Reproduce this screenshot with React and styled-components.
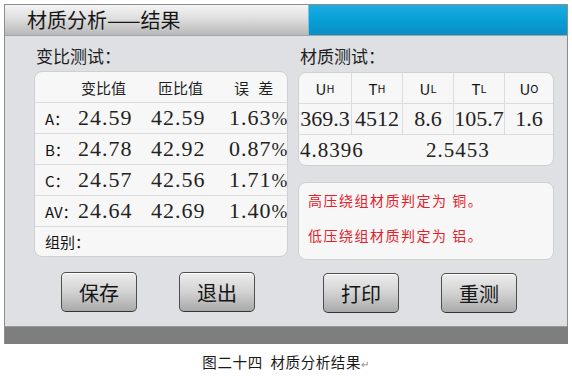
import * as React from "react"
import styled, { createGlobalStyle } from "styled-components"

const SANS = `"Noto Sans CJK SC", "Noto Sans", sans-serif`
const SERIF = `"Liberation Serif", "DejaVu Serif", serif`

const GlobalStyle = createGlobalStyle`
  body {
    margin: 0;
    background: #ffffff;
    font-family: ${SANS};
  }
`

const Page = styled.div`
  width: 572px;
  height: 377px;
  overflow: hidden;
`

const Frame = styled.div`
  margin: 4px 0 0 4px;
  width: 564px;
  box-sizing: border-box;
  border: 1px solid #8d8d8d;
  border-bottom: none;
`

const TitleBar = styled.div`
  display: flex;
  height: 30px;
  background: linear-gradient(#f4f4f4, #dedede 45%, #b8b8ba);
  border-bottom: 1px solid #a4a4a6;
`

const Title = styled.div`
  flex: 1;
  padding-left: 22px;
  font-size: 20px;
  line-height: 30px;
  color: #161616;
`

const BlueBar = styled.div`
  width: 259px;
  background: linear-gradient(#1cacdf, #08a0d6 50%, #0a8fc3);
  box-shadow: inset 1px 0 0 #6cc6e6;
`

const Body = styled.div`
  display: grid;
  grid-template-columns: 254px 256px;
  column-gap: 10px;
  padding: 0 13px 13px 29px;
  background: #dfe0e4;
  border-bottom: 1px solid #9a9a9a;
`

const Column = styled.div`
  display: flex;
  flex-direction: column;
`

const SectionLabel = styled.div`
  height: ${(p) => p.$h}px;
  padding: 5px 0 0 ${(p) => p.$indent}px;
  box-sizing: border-box;
  font-size: 17px;
  line-height: 30px;
  color: #1e1e1e;
`

const Card = styled.div`
  background: #f7f7f7;
  border: 1px solid #cfd0d3;
  border-radius: 8px;
  overflow: hidden;
  box-sizing: border-box;
`

const RatioRow = styled.div`
  display: grid;
  grid-template-columns: 43px 73px 78px 1fr;
  align-items: center;
  height: ${(p) => p.$h || 31}px;
  border-top: ${(p) => (p.$first ? "none" : "1px solid #dcdcdc")};
  box-sizing: border-box;
`

const HeadCell = styled.div`
  padding-left: ${(p) => p.$pad}px;
  font-size: 15px;
  color: #1e1e1e;
  word-spacing: 6px;
  white-space: nowrap;
`

const RowLabel = styled.div`
  padding-left: 10px;
  font-size: 15px;
  color: #111;
  white-space: nowrap;
`

const Value = styled.div`
  font-family: ${SERIF};
  font-size: 22px;
  letter-spacing: 1px;
  color: #222;
  white-space: nowrap;
`

const Pct = styled.span`
  font-size: 19px;
  letter-spacing: 0;
`

const MatRow = styled.div`
  display: grid;
  grid-template-columns: 52px 51px 51px 51px 1fr;
  height: ${(p) => p.$h}px;
  border-top: ${(p) => (p.$first ? "none" : "1px solid #dcdcdc")};
  box-sizing: border-box;
`

const MatCell = styled.div`
  display: flex;
  align-items: center;
  justify-content: center;
  border-left: ${(p) => (p.$first ? "none" : "1px solid #dcdcdc")};
  font-size: 15px;
  color: #111;
  white-space: nowrap;
`

const Sub = styled.span`
  font-size: 11px;
`

const MatValue = styled.span`
  font-family: ${SERIF};
  font-size: 22px;
  color: #222;
`

const SumRow = styled.div`
  display: flex;
  align-items: center;
  height: 30px;
  border-top: 1px solid #dcdcdc;
  font-family: ${SERIF};
  font-size: 21px;
  color: #222;
`

const SumValue = styled.span`
  width: ${(p) => p.$w}px;
  padding-left: ${(p) => p.$pad}px;
  letter-spacing: 1px;
`

const MessageBox = styled(Card)`
  margin-top: 16px;
  height: 78px;
  padding: 6px 0 0 9px;
`

const Message = styled.div`
  font-size: 14px;
  line-height: 22px;
  letter-spacing: 1.5px;
  color: #e5202a;
  margin-top: ${(p) => p.$mt}px;
`

const ButtonGroup = styled.div`
  display: flex;
  gap: 42px;
  padding: ${(p) => p.$top}px 0 0 ${(p) => p.$pad}px;
`

const Button = styled.button`
  width: 76px;
  height: 40px;
  padding: 0;
  border: 1px solid #4e4e4e;
  border-bottom-color: #333;
  border-radius: 5px;
  background: linear-gradient(#ededed, #d2d2d2 50%, #a9a9aa);
  box-shadow: inset 0 1px 0 #ffffff;
  font-family: ${SANS};
  font-size: 20px;
  color: #151515;
`

const Band = styled.div`
  height: 17px;
  margin-right: -1px;
  background: #7e7e7e;
`

const Caption = styled.div`
  margin-top: 8px;
  text-align: center;
  font-size: 14.5px;
  line-height: 20px;
  letter-spacing: 0.6px;
  color: #1a1a1a;
  white-space: pre;
`

const ReturnMark = styled.span`
  font-size: 10px;
  color: #888;
`

const ratioRows = [
  ["A：", "24.59", "42.59", "1.63"],
  ["B：", "24.78", "42.92", "0.87"],
  ["C：", "24.57", "42.56", "1.71"],
  ["AV：", "24.64", "42.69", "1.40"],
]

const matHeads = [
  ["U", "H"],
  ["T", "H"],
  ["U", "L"],
  ["T", "L"],
  ["U", "O"],
]

const matValues = ["369.3", "4512", "8.6", "105.7", "1.6"]

export default function App() {
  return (
    <Page>
      <GlobalStyle />
      <Frame>
        <TitleBar>
          <Title>材质分析——结果</Title>
          <BlueBar />
        </TitleBar>
        <Body>
          <Column>
            <SectionLabel $h={35} $indent={2}>变比测试：</SectionLabel>
            <Card>
              <RatioRow $first $h={30}>
                <div />
                <HeadCell $pad={3}>变比值</HeadCell>
                <HeadCell $pad={7}>匝比值</HeadCell>
                <HeadCell $pad={5}>误 差</HeadCell>
              </RatioRow>
              {ratioRows.map(([label, a, b, c]) => (
                <RatioRow key={label}>
                  <RowLabel>{label}</RowLabel>
                  <Value>{a}</Value>
                  <Value>{b}</Value>
                  <Value>
                    {c}
                    <Pct>%</Pct>
                  </Value>
                </RatioRow>
              ))}
              <RatioRow $h={30}>
                <RowLabel>组别：</RowLabel>
              </RatioRow>
            </Card>
            <ButtonGroup $top={15} $pad={27}>
              <Button>保存</Button>
              <Button>退出</Button>
            </ButtonGroup>
          </Column>
          <Column>
            <SectionLabel $h={36} $indent={2}>材质测试：</SectionLabel>
            <Card>
              <MatRow $first $h={30}>
                {matHeads.map(([main, sub], i) => (
                  <MatCell key={i} $first={i === 0}>
                    {main}
                    <Sub>{sub}</Sub>
                  </MatCell>
                ))}
              </MatRow>
              <MatRow $h={31}>
                {matValues.map((v, i) => (
                  <MatCell key={i} $first={i === 0}>
                    <MatValue>{v}</MatValue>
                  </MatCell>
                ))}
              </MatRow>
              <SumRow>
                <SumValue $w={126} $pad={1}>4.8396</SumValue>
                <SumValue $w={100} $pad={0}>2.5453</SumValue>
              </SumRow>
            </Card>
            <MessageBox>
              <Message $mt={0}>高压绕组材质判定为 铜。</Message>
              <Message $mt={13}>低压绕组材质判定为 铝。</Message>
            </MessageBox>
            <ButtonGroup $top={13} $pad={25}>
              <Button>打印</Button>
              <Button>重测</Button>
            </ButtonGroup>
          </Column>
        </Body>
        <Band />
      </Frame>
      <Caption>
        {"图二十四  材质分析结果"}
        <ReturnMark>↵</ReturnMark>
      </Caption>
    </Page>
  )
}
